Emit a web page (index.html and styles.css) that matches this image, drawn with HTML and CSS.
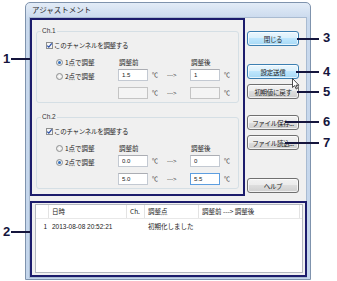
FILE: index.html
```html
<!DOCTYPE html>
<html lang="ja">
<head>
    <meta charset="UTF-8">
    <meta name="viewport" content="width=device-width, initial-scale=1.0">
    <title>アジャストメント</title>
    <link rel="stylesheet" href="styles.css">
</head>
<body>
    <div class="window">
      <div class="titlebar">アジャストメント</div>
      <div class="client">

        <div class="channels hl">
          <fieldset class="group">
            <legend>Ch.1</legend>
            <div class="check"><span class="box"><svg width="7" height="7" viewBox="0 0 7 7"><path d="M1.2 3.6 L2.8 5.2 L5.8 1.4" fill="none" stroke="#2a4fa8" stroke-width="1.2"/></svg></span>このチャンネルを調整する</div>
            <div class="adjust">
              <div class="opt"><span class="radio on"></span>1点で調整</div>
              <div class="cap">調整前</div>
              <div></div><div></div>
              <div class="cap">調整後</div>
              <div></div>

              <div class="opt second"><span class="radio"></span>2点で調整</div>
              <input class="field" type="text" value="1.5">
              <div class="unit">℃</div>
              <div class="arrow">---&gt;</div>
              <input class="field" type="text" value="1">
              <div class="unit">℃</div>

              <div></div>
              <input class="field" type="text" value="" disabled>
              <div class="unit">℃</div>
              <div class="arrow">---&gt;</div>
              <input class="field" type="text" value="" disabled>
              <div class="unit">℃</div>
            </div>
          </fieldset>

          <fieldset class="group next">
            <legend>Ch.2</legend>
            <div class="check"><span class="box"><svg width="7" height="7" viewBox="0 0 7 7"><path d="M1.2 3.6 L2.8 5.2 L5.8 1.4" fill="none" stroke="#2a4fa8" stroke-width="1.2"/></svg></span>このチャンネルを調整する</div>
            <div class="adjust">
              <div class="opt"><span class="radio"></span>1点で調整</div>
              <div class="cap">調整前</div>
              <div></div><div></div>
              <div class="cap">調整後</div>
              <div></div>

              <div class="opt second"><span class="radio on"></span>2点で調整</div>
              <input class="field" type="text" value="0.0">
              <div class="unit">℃</div>
              <div class="arrow">---&gt;</div>
              <input class="field" type="text" value="0">
              <div class="unit">℃</div>

              <div></div>
              <input class="field" type="text" value="5.0">
              <div class="unit">℃</div>
              <div class="arrow">---&gt;</div>
              <input class="field focus" type="text" value="5.5">
              <div class="unit">℃</div>
            </div>
          </fieldset>
        </div>

        <div class="actions">
          <button class="btn hot first">閉じる</button>
          <button class="btn hot gap-l">設定送信</button>
          <button class="btn gap-s">初期値に戻す</button>
          <button class="btn gap-m">ファイル保存...</button>
          <button class="btn gap-s">ファイル読込...</button>
          <button class="btn gap-xl">ヘルプ</button>
        </div>

        <div class="log hl">
          <div class="listview">
            <div class="lv-row lv-head">
              <div></div>
              <div>日時</div>
              <div>Ch.</div>
              <div>調整点</div>
              <div>調整前 ---&gt; 調整後</div>
            </div>
            <div class="lv-row">
              <div class="idx">1</div>
              <div class="mono">2013-08-08 20:52:21</div>
              <div></div>
              <div>初期化しました</div>
              <div></div>
            </div>
          </div>
        </div>

      </div>
    </div>

    <!-- callouts -->
    <div class="num" style="left:3px; top:52px">1</div>
    <div class="lead" style="left:11px; top:58px; width:19px"></div>
    <div class="num" style="left:3px; top:225px">2</div>
    <div class="lead" style="left:11px; top:231px; width:19px"></div>
    <div class="num" style="left:323px; top:31px">3</div>
    <div class="lead" style="left:297px; top:38px; width:22px"></div>
    <div class="num" style="left:323px; top:65px">4</div>
    <div class="lead" style="left:296px; top:71px; width:23px"></div>
    <div class="num" style="left:323px; top:85px">5</div>
    <div class="lead" style="left:297px; top:91px; width:22px"></div>
    <div class="num" style="left:323px; top:115px">6</div>
    <div class="lead" style="left:285px; top:121px; width:34px"></div>
    <div class="num" style="left:323px; top:136px">7</div>
    <div class="lead" style="left:285px; top:142px; width:34px"></div>

    <svg class="cursor" width="8" height="12" viewBox="0 0 8 12">
      <path d="M0.5 0.5 L0.5 9.5 L2.6 7.6 L4.2 11 L5.5 10.4 L4 7.2 L6.9 7.2 Z" fill="#fff" stroke="#222" stroke-width="0.8"/>
    </svg>
</body>
</html>
```

FILE: styles.css
```css
body {
    margin: 0;
    padding: 2px 0 0 25px;
    width: 337px;
    height: 281px;
    box-sizing: border-box;
    position: relative;
    overflow: hidden;
    background: #fff;
    font-family: "Noto Sans CJK JP", sans-serif;
    font-size: 6.5px;
    color: #222;
}

.window {
    width: 286px;
    height: 278px;
    box-sizing: border-box;
    border: 1px solid #7f93ad;
    border-radius: 5px 5px 0 0;
    background: linear-gradient(#e3ecf7, #c9d9ed 16px, #c4d6ec);
    padding: 0 3px 2px 3px;
}

.titlebar {
    height: 14px;
    line-height: 14px;
    padding-left: 3px;
    font-size: 7.5px;
    color: #2a2a2a;
}

.client {
    height: 261px;
    box-sizing: border-box;
    border: 1px solid #a9bbd1;
    background: #f0f0f0;
    display: grid;
    grid-template-columns: 215px 1fr;
    grid-template-rows: 178px 76px;
    row-gap: 5px;
}

.hl {
    border: 2px solid #1c1c6c;
    box-sizing: border-box;
}

.channels {
    grid-column: 1;
    grid-row: 1;
}

/* group boxes */
.group {
    margin: 7px 4px 0 4px;
    padding: 0 0 0 9px;
    height: 76px;
    box-sizing: border-box;
    border: 1px solid #d5dfe5;
    border-radius: 3px;
    min-width: 0;
}
.group.next {
    margin-top: 10px;
}
.group legend {
    margin-left: -5px;
    padding: 0 1px;
    line-height: 8px;
    font-family: "Liberation Sans", sans-serif;
    font-size: 6.5px;
    color: #333;
}

.check {
    margin-top: 6px;
    height: 9px;
    line-height: 9px;
    display: flex;
    align-items: center;
    gap: 1px;
    letter-spacing: -0.3px;
}
.box {
    width: 7px;
    height: 7px;
    box-sizing: border-box;
    border: 1px solid #8e8f8f;
    background: #f4f4f4;
    display: flex;
    align-items: center;
    justify-content: center;
}
.box svg {
    display: block;
    margin: -1px;
}

.adjust {
    margin-top: 8px;
    display: grid;
    grid-template-columns: 72px 30px 18px 24px 30px 1fr;
    grid-template-rows: 11px 18px 12px;
    align-items: start;
}
.opt {
    padding-left: 10px;
    line-height: 9px;
    display: flex;
    align-items: center;
    gap: 2px;
}
.opt.second {
    margin-top: 3px;
}
.radio {
    width: 7px;
    height: 7px;
    box-sizing: border-box;
    border: 1px solid #8e8f8f;
    border-radius: 50%;
    background: radial-gradient(#fdfdfd, #dcdcdc);
    display: flex;
    align-items: center;
    justify-content: center;
}
.radio.on::after {
    content: "";
    width: 3px;
    height: 3px;
    border-radius: 50%;
    background: #2f6fc0;
}
.cap {
    line-height: 9px;
    padding-left: 1px;
}

.field {
    width: 30px;
    height: 12px;
    margin: 0;
    padding: 0 0 0 3px;
    box-sizing: border-box;
    border: 1px solid #c3c9d2;
    border-top-color: #abadb3;
    background: #fff;
    font-family: "Liberation Sans", sans-serif;
    font-size: 6px;
    line-height: 10px;
    color: #222;
    outline: none;
}
.field:disabled {
    background: #f4f4f4;
    border-color: #c4c4c4;
}
.field.focus {
    border-color: #5d9ee0;
}
.unit {
    padding-left: 4px;
    line-height: 12px;
    font-size: 6px;
    color: #333;
}
.arrow {
    padding-left: 1px;
    line-height: 12px;
    font-family: "Liberation Sans", sans-serif;
    font-size: 6px;
    color: #333;
}

/* buttons */
.actions {
    grid-column: 2;
    grid-row: 1;
    padding: 13px 0 0 2px;
    display: flex;
    flex-direction: column;
    align-items: flex-start;
}
.btn {
    width: 52px;
    height: 15px;
    padding: 0;
    border: 1px solid #707070;
    border-radius: 3px;
    background: linear-gradient(#f2f2f2, #ebebeb 50%, #dddddd 50%, #cfcfcf);
    font-family: "Noto Sans CJK JP", sans-serif;
    font-size: 6.5px;
    letter-spacing: -0.3px;
    color: #222;
    box-shadow: inset 0 0 0 1px rgba(255, 255, 255, 0.7);
}
.btn.hot {
    border-color: #3c7fb1;
    background: linear-gradient(#eaf6fd, #d9f0fc 50%, #bee6fd 50%, #a7d9f5);
}
.gap-s { margin-top: 5px; }
.gap-m { margin-top: 16px; }
.gap-l { margin-top: 18px; }
.gap-xl { margin-top: 28px; }

/* log */
.log {
    grid-column: 1 / -1;
    grid-row: 2;
    width: 277px;
    padding: 1px 2px 2px 3px;
}
.listview {
    height: 100%;
    box-sizing: border-box;
    border: 1px solid #b4b8c0;
    background: #fff;
}
.lv-row {
    display: grid;
    grid-template-columns: 13px 78px 18px 54px 1fr;
    line-height: 11px;
}
.lv-row > div {
    padding-left: 3px;
    white-space: nowrap;
    overflow: hidden;
}
.lv-head {
    height: 13px;
    line-height: 13px;
    border-bottom: 1px solid #e8e8e8;
    margin-bottom: 2px;
}
.lv-head > div {
    border-right: 1px solid #e3e3e3;
}
.lv-head > div:last-child {
    margin-right: 2px;
}
.lv-row .idx {
    padding: 0 2px 0 0;
    text-align: right;
}
.mono {
    font-family: "Liberation Sans", sans-serif;
    font-size: 6.5px;
}

/* callouts */
.num {
    position: absolute;
    font-family: "Liberation Sans", sans-serif;
    font-weight: bold;
    font-size: 13px;
    line-height: 13px;
    color: #15153d;
}
.lead {
    position: absolute;
    height: 2px;
    background: #15153d;
}
.cursor {
    position: absolute;
    left: 292px;
    top: 78px;
}
```
